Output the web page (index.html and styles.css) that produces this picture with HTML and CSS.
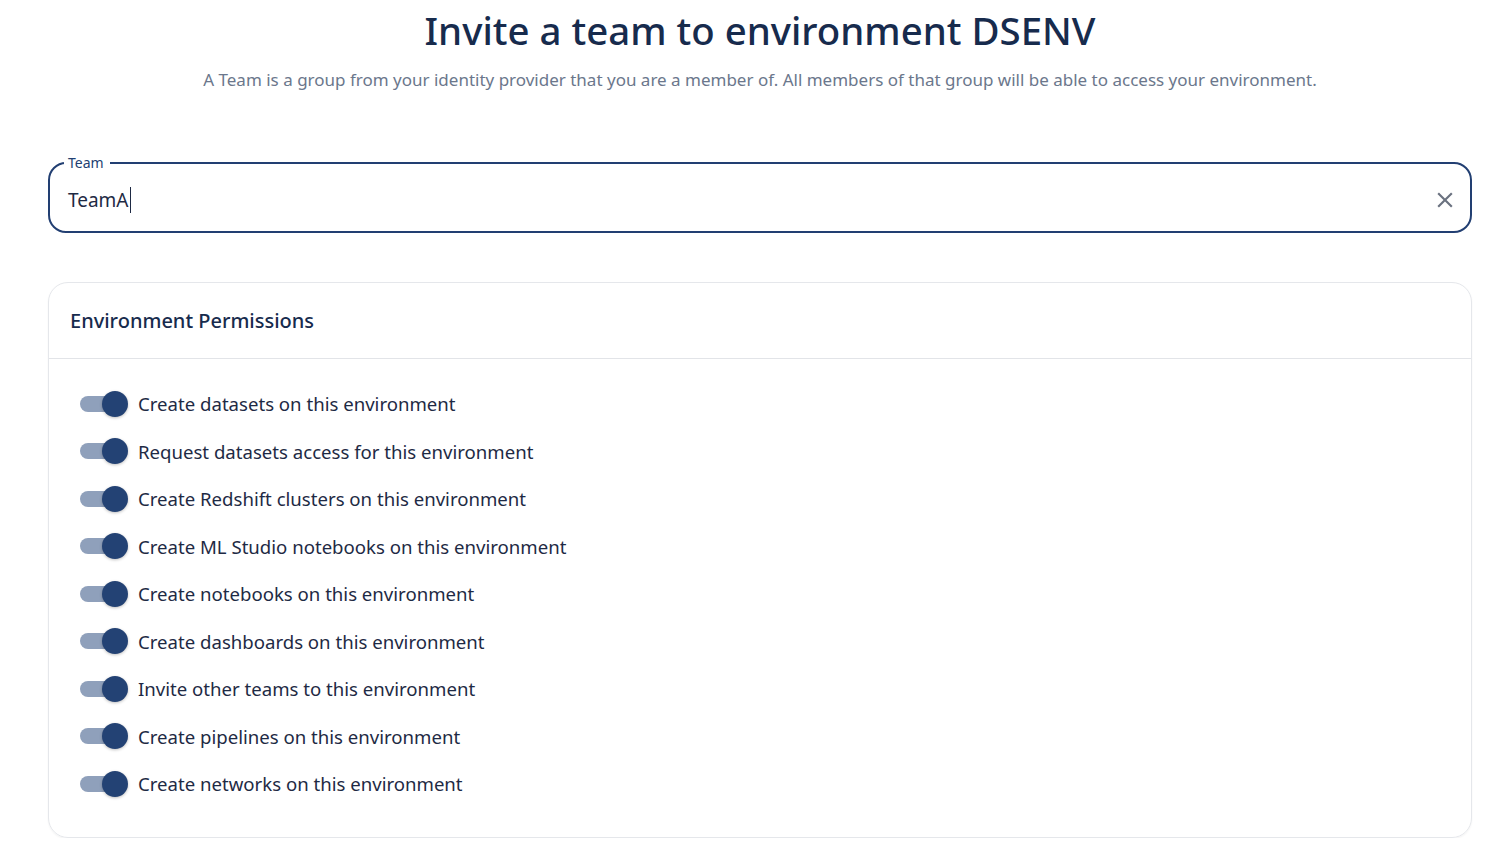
FILE: index.html
```html
<!DOCTYPE html>
<html>
<head>
<meta charset="utf-8">
<link rel="stylesheet" href="styles.css">
</head>
<body>
<div class="page">
  <h1 class="title">Invite a team to environment DSENV</h1>
  <p class="subtitle">A Team is a group from your identity provider that you are a member of. All members of that group will be able to access your environment.</p>

  <fieldset class="field">
    <legend class="field-label">Team</legend>
    <div class="field-row">
      <span class="field-value">TeamA<span class="caret"></span></span>
      <svg class="clear" width="26" height="26" viewBox="0 0 24 24"><path d="M19 6.41 17.59 5 12 10.59 6.41 5 5 6.41 10.59 12 5 17.59 6.41 19 12 13.41 17.59 19 19 17.59 13.41 12z" fill="#6b7280"/></svg>
    </div>
  </fieldset>

  <section class="card">
    <div class="card-header">Environment Permissions</div>
    <div class="card-body">
      <label class="perm"><span class="switch"><span class="track"></span><span class="thumb"></span></span><span class="perm-text">Create datasets on this environment</span></label>
      <label class="perm"><span class="switch"><span class="track"></span><span class="thumb"></span></span><span class="perm-text">Request datasets access for this environment</span></label>
      <label class="perm"><span class="switch"><span class="track"></span><span class="thumb"></span></span><span class="perm-text">Create Redshift clusters on this environment</span></label>
      <label class="perm"><span class="switch"><span class="track"></span><span class="thumb"></span></span><span class="perm-text">Create ML Studio notebooks on this environment</span></label>
      <label class="perm"><span class="switch"><span class="track"></span><span class="thumb"></span></span><span class="perm-text">Create notebooks on this environment</span></label>
      <label class="perm"><span class="switch"><span class="track"></span><span class="thumb"></span></span><span class="perm-text">Create dashboards on this environment</span></label>
      <label class="perm"><span class="switch"><span class="track"></span><span class="thumb"></span></span><span class="perm-text">Invite other teams to this environment</span></label>
      <label class="perm"><span class="switch"><span class="track"></span><span class="thumb"></span></span><span class="perm-text">Create pipelines on this environment</span></label>
      <label class="perm"><span class="switch"><span class="track"></span><span class="thumb"></span></span><span class="perm-text">Create networks on this environment</span></label>
    </div>
  </section>
</div>
</body>
</html>
```

FILE: styles.css
```css
* { box-sizing: border-box; }
html, body { margin: 0; padding: 0; background: #fff; }
body {
  font-family: "Noto Sans", "Open Sans", sans-serif;
  color: #1e2a44;
}
.page {
  padding: 0 26px 0 48px;
}
.title {
  margin: 0;
  padding-top: 6px;
  text-align: center;
  font-size: 38.4px;
  font-weight: 500;
  line-height: 48px;
  color: #172b4d;
}
.subtitle {
  margin: 15px 0 0;
  text-align: center;
  font-size: 17px;
  line-height: 22px;
  color: #6b778c;
}
.field {
  margin: 63px 0 0;
  padding: 0 12px 0 18px;
  border: 2px solid #223f72;
  border-radius: 18px;
  height: 79px;
}
.field-label {
  margin-left: -4px;
  padding: 0 6px 0 4px;
  font-size: 14px;
  line-height: 18px;
  color: #223f72;
}
.field-row {
  display: flex;
  align-items: center;
  justify-content: space-between;
  height: 50px;
  margin-top: 3px;
}
.field-value {
  font-size: 19px;
  color: #1e2a44;
  display: flex;
  align-items: center;
}
.caret {
  display: inline-block;
  width: 1px;
  height: 26px;
  background: #1e2a44;
  margin-left: 1px;
}
.clear { display: block; }
.card {
  margin-top: 49px;
  border: 1px solid #e5e7eb;
  border-radius: 20px;
  box-shadow: 0 1px 2px rgba(0,0,0,0.05);
}
.card-header {
  height: 76px;
  padding: 0 21px;
  display: flex;
  align-items: center;
  font-size: 20px;
  font-weight: 500;
  color: #172b4d;
  border-bottom: 1px solid #e2e4e8;
}
.card-body {
  padding: 21px 31px 29px;
  display: flex;
  flex-direction: column;
}
.perm {
  display: flex;
  align-items: center;
  height: 47.5px;
}
.switch {
  position: relative;
  width: 48px;
  height: 26px;
  margin-right: 10px;
  flex: none;
}
.track {
  position: absolute;
  left: 0;
  top: 5px;
  width: 42px;
  height: 16px;
  border-radius: 8px;
  background: #8fa0bb;
}
.thumb {
  position: absolute;
  left: 22px;
  top: 0;
  width: 26px;
  height: 26px;
  border-radius: 50%;
  background: #234274;
  box-shadow: 0 1px 3px rgba(0,0,0,0.25);
}
.perm-text {
  font-size: 18.6px;
  color: #1e2a44;
}
```
